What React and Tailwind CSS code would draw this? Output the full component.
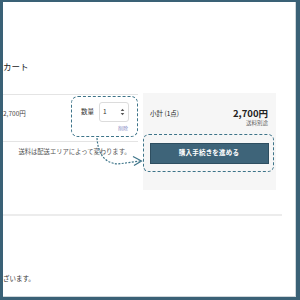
import React from 'react';

const jp = { fontFamily: '"Noto Sans CJK JP", "Noto Sans", sans-serif' };

const QuantityBox = () => (
    <div className="ml-auto mt-[1px] w-[67px] h-[41px] border-[1.5px] border-dashed border-[#3d7489] rounded-[7px] flex flex-col items-end pr-[8px] pt-[5px]">
        <div className="flex items-center">
            <span className="text-[6.5px] text-[#333] mr-[5px]">数量</span>
            <div className="w-[30px] h-[20px] bg-white border border-[#dcdcdc] rounded-[3px] flex items-center justify-between px-[3px]">
                <span className="text-[6.5px] text-[#333]">1</span>
                <svg width="5" height="8" viewBox="0 0 5 8">
                    <path d="M2.5 0.8 L4.3 3 L0.7 3 Z" fill="#555" />
                    <path d="M2.5 7.2 L4.3 5 L0.7 5 Z" fill="#555" />
                </svg>
            </div>
        </div>
        <span className="text-[5px] text-[#8a8fc4] mt-[3px] mr-[1px] leading-none">削除</span>
    </div>
);

export default function App() {
    return (
        <div style={jp} className="w-[300px] h-[300px] bg-[#3a6176] pl-[3px] pt-[2px] pr-[4px] pb-[3px]">
            <div className="relative w-full h-full bg-white border-r border-b border-[#cfd6da] overflow-hidden">
                <h2 className="mt-[57px] text-[8.5px] leading-[14px] text-[#222]">カート</h2>

                <div className="flex items-start mt-[21px]">
                    <div className="w-[135px]">
                        <div className="flex items-start border-t border-b border-[#e4e4e4] h-[48px]">
                            <span className="mt-[13px] text-[6.5px] leading-[10px] text-[#444]">2,700円</span>
                            <QuantityBox />
                        </div>
                        <p className="mt-[5px] text-center pl-[8px] text-[6.3px] leading-[10px] text-[#555]">送料は配送エリアによって変わります。</p>
                    </div>

                    <div className="ml-[5px] w-[133px] h-[97px] bg-[#f6f6f6] -mt-[1px]">
                        <div className="flex justify-between items-start pl-[7px] pr-[8px] pt-[14px]">
                            <span className="mt-[2px] text-[6.5px] text-[#222]">小計 (1点)</span>
                            <div className="flex flex-col items-end">
                                <span className="text-[9.5px] leading-[12px] font-bold text-[#222]">2,700円</span>
                                <span className="text-[5.5px] leading-[8px] text-[#666]">送料別途</span>
                            </div>
                        </div>
                        <div className="mt-[7px] w-[131px] h-[38px] border-[1.5px] border-dashed border-[#3d7489] rounded-[6px] pl-[5.5px] pr-[4.5px] pt-[7.5px]">
                            <div className="h-[21px] bg-[#3e6479] border border-[#2e4e60] flex items-center justify-center">
                                <span className="text-[6.5px] font-bold text-white tracking-[0.2px]">購入手続きを進める</span>
                            </div>
                        </div>
                    </div>
                </div>

                <div className="mt-[24px] w-[279px] h-[2px] bg-[#ececec]" />

                <p className="mt-[57px] text-[6.5px] leading-[10px] text-[#333]">ざいます。</p>

                <svg className="absolute pointer-events-none" style={{ left: -3, top: -2 }} width="300" height="300" viewBox="0 0 300 300">
                    <path d="M97 138 C 98 152, 103 163, 118 164 L 140 161" fill="none" stroke="#3d7489" strokeWidth="1.2" strokeDasharray="2 1.4" />
                    <path d="M133 156.5 L 141.5 161 L 134 165.5" fill="none" stroke="#3d7489" strokeWidth="1.2" />
                </svg>
            </div>
        </div>
    );
}
